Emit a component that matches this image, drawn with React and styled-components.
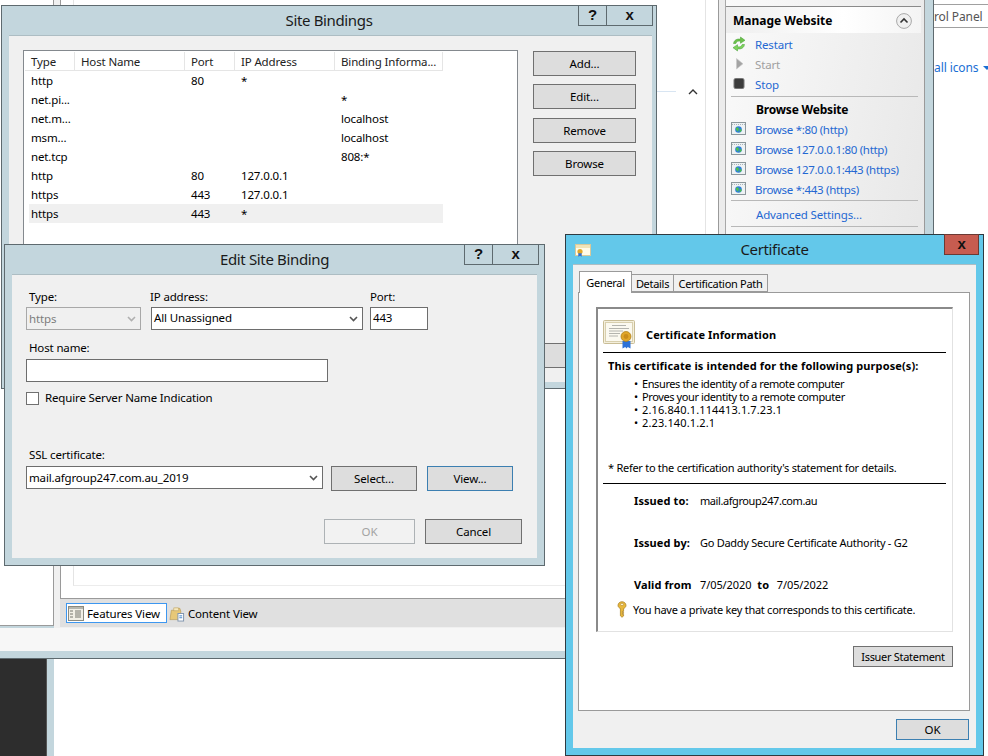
import React from "react"
import styled, { createGlobalStyle } from "styled-components"

const frame = "#c3d6dd"
const edge = "#5e6a6f"
const panel = "#f0f0f0"
const link = "#2468d2"

const Global = createGlobalStyle`
  html, body { margin: 0; padding: 0; background: #fff; }
  * { box-sizing: border-box; }
`

const Desktop = styled.div`
  position: relative;
  width: 988px;
  height: 756px;
  overflow: hidden;
  background: #fff;
  font-family: "Noto Sans", sans-serif;
  font-size: 11.5px;
  letter-spacing: -0.15px;
  color: #000;
`

/* windows on the desktop */
const Win = styled.div`
  position: absolute;
  left: ${p => p.$x}px;
  top: ${p => p.$y}px;
  width: ${p => p.$w}px;
  height: ${p => p.$h}px;
  background: ${p => p.$frame || frame};
  border: 1px solid ${p => p.$edge || edge};
  display: flex;
  flex-direction: column;
`
const MainWin = styled(Win)`
  border-top: none;
`
const TitleBar = styled.div`
  height: 29px;
  flex: none;
  position: relative;
  display: flex;
  align-items: center;
  justify-content: center;
  padding-bottom: 2px;
  font-size: 15px;
  letter-spacing: -0.35px;
  color: #1a1a1a;
`
const CaptionButtons = styled.div`
  position: absolute;
  top: -1px;
  right: ${p => p.$right}px;
  display: flex;
`
const CaptionButton = styled.div`
  width: ${p => p.$w}px;
  height: 21px;
  margin-left: -1px;
  border: 1px solid ${edge};
  background: ${frame};
  display: flex;
  align-items: center;
  justify-content: center;
  padding-bottom: 2px;
  font-family: "Liberation Sans", sans-serif;
  font-size: 15px;
  font-weight: 700;
  color: #111;
`
const CloseRed = styled(CaptionButton)`
  background: #c75c50;
  border-color: #6b3a34;
`
const Body = styled.div`
  flex: 1;
  background: ${panel};
  margin: 0 ${p => p.$r}px ${p => p.$b}px ${p => p.$l}px;
  border-top: 1px solid #adbdc3;
  position: relative;
`

/* main IIS window */
const MainInner = styled.div`
  flex: 1;
  display: flex;
  min-height: 0;
`
const LeftPane = styled.div`
  width: 54px;
  height: 627px;
  flex: none;
  background: #fff;
  border-right: 1px solid #9a9a9a;
  border-bottom: 1px solid #9a9a9a;
`
const CenterPane = styled.div`
  width: 664px;
  flex: none;
  display: flex;
  flex-direction: column;
  padding-left: 6px;
  background: #f0f0f0;
`
const ContentFrame = styled.div`
  height: 600px;
  flex: none;
  background: #fff;
  border-left: 1px solid #9a9a9a;
  border-bottom: 1px solid #9a9a9a;
  padding-left: 12px;
`
const InnerFrame = styled.div`
  height: 587px;
  width: 633px;
  border-left: 1px solid #e4e4e4;
  border-right: 1px solid #e4e4e4;
  border-bottom: 1px solid #ececec;
  display: flex;
  align-items: flex-start;
  padding-top: 85px;
`
const GroupLine = styled.div`
  flex: 1;
  height: 1px;
  margin-top: 7px;
  margin-right: 12px;
  background: #d8e5f2;
`
const GroupChevron = styled.svg`
  width: 10px;
  height: 10px;
  margin-right: 7px;
  margin-top: 3px;
`
const ViewBar = styled.div`
  height: 28px;
  flex: none;
  background: #e0e0e0;
  display: flex;
  align-items: center;
  padding-left: 6px;
`
const ViewTab = styled.div`
  height: 20px;
  display: flex;
  align-items: center;
  gap: 3px;
  padding: 0 6px 0 1px;
  border: 1px solid ${p => (p.$active ? "#3d97f0" : "transparent")};
  background: ${p => (p.$active ? "#fff" : "transparent")};
`
const ActionsPane = styled.div`
  width: 215px;
  flex: none;
  display: flex;
  border-left: 1px solid #9a9a9a;
  background: #ececec;
  padding-left: 6px;
`
const ActionsInner = styled.div`
  width: 200px;
  flex: none;
  border-left: 1px solid #a8a8a8;
  border-right: 1px solid #9a9a9a;
  background: linear-gradient(100deg, #fafafa 0%, #e2e2e2 100%);
  padding-top: 7px;
`
const SectionHead = styled.div`
  height: 27px;
  border-top: 1px solid #8a8a8a;
  background: linear-gradient(90deg, #eeeeee, #ffffff 60%, #f4f4f4);
  margin-right: 3px;
  display: flex;
  align-items: center;
  justify-content: space-between;
  padding: 1px 9px 0 7px;
  font-weight: 700;
  font-size: 12px;
  letter-spacing: 0;
`
const ActionList = styled.div`
  padding-top: ${p => p.$pad}px;
`
const ActionRow = styled.div`
  height: ${p => p.$h || 20}px;
  display: flex;
  align-items: center;
  padding-left: ${p => p.$in || 5}px;
  padding-top: ${p => p.$pt || 0}px;
  color: ${p => (p.$off ? "#a0a0a0" : link)};
  letter-spacing: ${p => p.$sp ?? -0.15}px;
  white-space: nowrap;
`
const ActionIcon = styled.div`
  width: 24px;
  flex: none;
  display: flex;
  align-items: center;
`
const ActionSplit = styled.div`
  height: 1px;
  background: #b8b8b8;
  margin: ${p => p.$m || "0"};
`
const ActionTitle = styled.div`
  padding-left: 30px;
  height: 18px;
  line-height: 18px;
  margin-top: 4px;
  font-size: 12px;
  font-weight: 700;
  letter-spacing: -0.2px;
`
const SideStrip = styled.div`
  flex: 1;
  background: ${frame};
`
const StatusBar = styled.div`
  height: 23px;
  flex: none;
  background: #f7f7f7;
`
const MainBottom = styled.div`
  height: 7px;
  flex: none;
  background: ${frame};
`

/* strip under the main window */
const DarkBlock = styled.div`
  position: absolute;
  left: 0;
  top: 659px;
  width: 47px;
  height: 97px;
  background: #2d2d2d;
  border-right: 1px solid #555;
`
const DarkEdge = styled.div`
  position: absolute;
  left: 47px;
  top: 659px;
  width: 7px;
  height: 97px;
  background: ${frame};
`

/* window behind, on the right */
const Breadcrumb = styled.div`
  position: absolute;
  left: 934px;
  top: 4px;
  width: 54px;
  height: 24px;
  border-top: 1px solid #a0a0a0;
  border-bottom: 1px solid #a0a0a0;
  line-height: 23px;
  overflow: hidden;
  white-space: nowrap;
  color: #555;
  font-size: 12px;
  letter-spacing: -0.1px;
`
const ViewLink = styled.div`
  position: absolute;
  left: 934px;
  top: 59px;
  color: #1a6fd4;
  font-size: 12px;
  letter-spacing: -0.1px;
  white-space: nowrap;
  display: flex;
  align-items: center;
  gap: 5px;
`
const TriDown = styled.span`
  width: 0;
  height: 0;
  border-left: 4px solid transparent;
  border-right: 4px solid transparent;
  border-top: 4px solid #1a6fd4;
`

/* Site Bindings */
const BindingsBody = styled.div`
  display: flex;
  padding: 14px 0 0 14px;
  height: 100%;
`
const ListBox = styled.div`
  width: 495px;
  height: 320px;
  flex: none;
  background: #fff;
  border: 1px solid #84898e;
  padding: 1px;
`
const ListHeader = styled.div`
  display: grid;
  grid-template-columns: 50px 110px 50px 100px 108px;
  height: 19px;
  border-bottom: 1px solid #e5e5e5;
  width: 418px;
`
const HeaderCell = styled.div`
  border-right: 1px solid #e5e5e5;
  padding-left: 6px;
  line-height: 19px;
  white-space: nowrap;
  color: #222;
`
const ListBodyRows = styled.div`
  padding-left: 4px;
`
const ListRow = styled.div`
  display: grid;
  grid-template-columns: 50px 110px 50px 100px 104px;
  height: 19px;
  width: 414px;
  line-height: 19px;
  background: ${p => (p.$sel ? "#f0f0f0" : "transparent")};
`
const ListCell = styled.div`
  padding-left: 2px;
  white-space: nowrap;
`
const SideButtons = styled.div`
  display: flex;
  flex-direction: column;
  margin-left: 15px;
  margin-top: 1px;
`
const Btn = styled.div`
  width: ${p => p.$w}px;
  height: ${p => p.$h || 25}px;
  margin-top: ${p => p.$mt || 0}px;
  margin-bottom: ${p => p.$mb || 0}px;
  margin-left: ${p => p.$ml || 0}px;
  margin-right: ${p => p.$mr || 0}px;
  background: ${p => (p.$off ? "#f2f2f2" : "#dddddd")};
  border: 1px solid ${p => (p.$off ? "#adb2b5" : p.$focus ? "#3c7fb1" : "#707070")};
  color: ${p => (p.$off ? "#a3a3a3" : "#000")};
  display: flex;
  align-items: center;
  justify-content: center;
  flex: none;
`
const CloseBehind = styled(Btn)`
  position: absolute;
  right: 0;
  top: 307px;
  border-right: none;
`

/* Edit Site Binding */
const EditBody = styled.div`
  padding: 14px 0 0 14px;
`
const FieldRow = styled.div`
  display: flex;
  gap: ${p => p.$gap || 0}px;
  margin-top: ${p => p.$mt || 0}px;
  align-items: ${p => p.$align || "flex-start"};
`
const Field = styled.div`
  width: ${p => p.$w}px;
  margin-left: ${p => p.$ml || 0}px;
  flex: none;
`
const Label = styled.div`
  height: 18px;
  line-height: ${p => p.$lh || 15}px;
  padding-left: ${p => p.$in ?? 3}px;
  margin-left: ${p => p.$out || 0}px;
  white-space: nowrap;
`
const Combo = styled.div`
  height: 23px;
  width: 100%;
  background: ${p => (p.$off ? panel : "#fff")};
  border: 1px solid ${p => (p.$off ? "#a8a8a8" : "#6d6d6d")};
  display: flex;
  align-items: center;
  justify-content: space-between;
  padding: 0 4px ${p => p.$pb ?? 2}px 2px;
  color: ${p => (p.$off ? "#7d7d7d" : "#000")};
  flex: none;
`
const Arrow = styled.svg`
  width: 9px;
  height: 6px;
  flex: none;
  margin-top: 2px;
`
const CheckRow = styled.div`
  display: flex;
  align-items: center;
  gap: 6px;
  margin-top: 9px;
  height: 14px;
  padding-bottom: 2px;
`
const CheckBox = styled.div`
  width: 13px;
  height: 13px;
  margin-top: 2px;
  background: #fff;
  border: 1px solid #707070;
`
const EditFooter = styled.div`
  display: flex;
  justify-content: flex-end;
  gap: 10px;
  margin-top: 30px;
  padding-right: 15px;
`

/* Certificate */
const CertBody = styled.div`
  padding: 6px 6px 0 5px;
  height: 100%;
  display: flex;
  flex-direction: column;
`
const TabStrip = styled.div`
  display: flex;
  align-items: flex-end;
  height: 21px;
  padding-left: 1px;
  position: relative;
  z-index: 1;
`
const Tab = styled.div`
  width: ${p => p.$w}px;
  height: ${p => (p.$on ? 22 : 18)}px;
  margin-bottom: ${p => (p.$on ? -1 : 0)}px;
  margin-left: ${p => (p.$on ? 0 : -1)}px;
  background: ${p => (p.$on ? "#fff" : "#f0f0f0")};
  border: 1px solid #9a9a9a;
  border-bottom: ${p => (p.$on ? "none" : "1px solid #9a9a9a")};
  text-align: center;
  line-height: ${p => (p.$on ? 21 : 18)}px;
  font-size: 11px;
  letter-spacing: -0.3px;
  white-space: nowrap;
`
const TabPanel = styled.div`
  height: 419px;
  flex: none;
  background: #fff;
  border: 1px solid #9a9a9a;
  padding: 14px 17px 0 17px;
`
const InfoBox = styled.div`
  height: 325px;
  width: 357px;
  border-top: 2px solid #8a8a8a;
  border-left: 2px solid #8a8a8a;
  border-right: 1px solid #e2e2e2;
  border-bottom: 1px solid #e2e2e2;
  padding: 0 6px 0 5px;
  font-size: 11px;
  letter-spacing: -0.27px;
`
const InfoHeader = styled.div`
  height: 44px;
  padding: 9px 0 2px;
  display: flex;
  gap: 11px;
  border-bottom: 1px solid #000;
  font-weight: 700;
  letter-spacing: 0.12px;
  align-items: center;
`
const Purpose = styled.div`
  font-weight: 700;
  letter-spacing: 0.12px;
  height: 14px;
  line-height: 14px;
  margin: 6px 0 0 5px;
  white-space: nowrap;
`
const Bullets = styled.ul`
  list-style: none;
  margin: 4px 0 0 0;
  padding: 0 0 0 31px;
`
const Bullet = styled.li`
  height: 13px;
  line-height: 13px;
  white-space: nowrap;
  letter-spacing: ${p => p.$sp}px;
  &::before {
    content: "•";
    display: inline-block;
    width: 8px;
  }
`
const Note = styled.div`
  height: 14px;
  line-height: 14px;
  margin: 32px 0 8px 5px;
  white-space: nowrap;
`
const InfoGrid = styled.div`
  border-top: 1px solid #000;
  padding: 10px 0 0 31px;
`
const InfoLine = styled.div`
  display: grid;
  grid-template-columns: 66px 1fr;
  height: 42px;
  line-height: 14px;
  white-space: nowrap;
`
const InfoKey = styled.span`
  font-weight: 700;
  letter-spacing: 0.1px;
`
const InfoValue = styled.span`
  letter-spacing: ${p => p.$sp ?? -0.27}px;
`
const InfoDate = styled.span`
  letter-spacing: -0.1px;
  margin-right: 6px;
  margin-left: ${p => p.$ml || 0}px;
`
const KeyRow = styled.div`
  display: flex;
  align-items: center;
  gap: 6px;
  padding-left: 14px;
  height: 18px;
  margin-top: -20px;
  white-space: nowrap;
`
const StatementRow = styled.div`
  display: flex;
  justify-content: flex-end;
  margin-top: 14px;
  font-size: 11px;
  letter-spacing: -0.3px;
`
const CertFooter = styled.div`
  display: flex;
  justify-content: flex-end;
  margin-top: 8px;
`

const RestartIcon = () => (
  <svg width="16" height="16" viewBox="0 0 16 16">
    <path d="M2.5 7.5C3 4 6 2.5 9.5 3.2L9.5 1l4.5 3.3-4.5 3V5.2C7 4.7 5.5 5.5 4.8 7.5z" fill="#6cc24a" stroke="#3f9a2e" strokeWidth=".5" />
    <path d="M13.5 8.5C13 12 10 13.5 6.5 12.8L6.5 15 2 11.7l4.5-3v2.1c2.5.5 4-.3 4.7-2.3z" fill="#7dd35c" stroke="#3f9a2e" strokeWidth=".5" />
  </svg>
)
const StartIcon = () => (
  <svg width="16" height="16" viewBox="0 0 16 16">
    <path d="M5.500 2.500v10.500l6.500-5.200z" fill="#a4a4a4" stroke="#c8c8c8" strokeWidth=".6" />
  </svg>
)
const StopIcon = () => (
  <svg width="16" height="16" viewBox="0 0 16 16">
    <rect x="3" y="2.500" width="10" height="10" rx="1.500" fill="#3c3c3c" stroke="#777" />
  </svg>
)
const BrowseIcon = () => (
  <svg width="16" height="14" viewBox="0 0 16 14">
    <rect x="0.5" y="0.5" width="14" height="12" fill="#eef2f4" stroke="#8c979b" />
    <path d="M1 2.500h13" stroke="#aab4b8" strokeDasharray="1 1" />
    <circle cx="7.500" cy="7.500" r="3.300" fill="#2f7fd6" />
    <path d="M5 6c1.400-.8 2.600-.4 2.800.7.100.9-.7 1.300-.5 2.900C6 9.400 4.600 7.700 5 6zM8.600 7.300c.9-.2 1.700 0 2.200.6-.3 1.100-1.100 1.900-2 2.100z" fill="#4cc04a" />
  </svg>
)
const CollapseIcon = () => (
  <svg width="16" height="16" viewBox="0 0 16 16">
    <circle cx="8" cy="8" r="7.400" fill="#f0f0f0" stroke="#a8a8a8" />
    <path d="M4.500 9.500 8 6l3.500 3.500" fill="none" stroke="#333" strokeWidth="1.600" />
  </svg>
)
const FeaturesIcon = () => (
  <svg width="16" height="16" viewBox="0 0 16 16">
    <rect x="0.5" y="1.500" width="15" height="14" fill="#f1efe6" stroke="#8a8a80" />
    <rect x="1" y="2" width="14" height="2" fill="#b7b7ae" />
    <path d="M2 6h3M2 9h3M2 12h3M7 6h6M7 8h6M7 10h6M7 12h6" stroke="#77776f" />
  </svg>
)
const ContentIcon = () => (
  <svg width="16" height="17" viewBox="0 0 17 17">
    <path d="M1 15 2.500 5h3l1-2h5l1 3v9z" fill="#e7c878" stroke="#b1924a" strokeWidth=".6" />
    <path d="M5 2.500h5l.5 3H5z" fill="#f7e9bd" stroke="#b1924a" strokeWidth=".5" />
    <rect x="9.500" y="8.500" width="6" height="8" fill="#fff" stroke="#7e93ad" />
    <path d="M11 11h3M11 13h3" stroke="#3a7fc9" />
  </svg>
)
const CertSmall = styled(({ className }) => (
  <svg className={className} width="16" height="13" viewBox="0 0 16 13">
    <rect x="0.5" y="0.5" width="15" height="11" fill="#fffbe8" stroke="#d8c99a" />
    <rect x="1" y="1" width="14" height="3" fill="#f1e4b8" />
    <circle cx="5" cy="7.500" r="2.600" fill="#e0a92c" />
    <path d="M3.300 9.300v3.400l1.700-1 1.700 1V9.300z" fill="#2f6fd0" />
  </svg>
))`
  position: absolute;
  left: 9px;
  top: 9px;
`
const CertLarge = styled(({ className }) => (
  <svg className={className} width="32" height="29" viewBox="0 0 32 29">
    <rect x="0.5" y="0.5" width="31" height="23" rx="1" fill="#f4efdc" stroke="#c9bd96" />
    <rect x="2.500" y="2.500" width="27" height="19" fill="#fbf9f0" stroke="#d8cfae" />
    <path d="M9 5.500h14M6 8.500h20M6 11h14M6 13.500h11M6 16h9" stroke="#b4b4ae" />
    <path d="M19.500 21v7.500l2.700-1.600 1.300 1.600 1.300-1.600 2.700 1.600V21z" fill="#2e72d8" />
    <circle cx="23" cy="16.500" r="5" fill="#e0a62a" stroke="#a97a16" strokeWidth=".7" />
    <circle cx="23" cy="16.500" r="2.400" fill="#c88c1c" />
  </svg>
))`
  flex: none;
`
const KeyIcon = styled(({ className }) => (
  <svg className={className} width="10" height="17" viewBox="0 0 10 17">
    <path d="M5 .7C2.800.7 1 2.300 1 4.300c0 1.500 1 2.700 2.400 3.200v7.300L5 16.300l1.600-1.400v-1.500H5.400v-1h1.200v-1H5.400v-1h1.200V7.500C8 7 9 5.800 9 4.300 9 2.300 7.200.7 5 .7z" fill="#e8b83c" stroke="#a67a1c" strokeWidth=".7" />
    <ellipse cx="5" cy="3.400" rx="1.600" ry="1.100" fill="#fff6d6" stroke="#a67a1c" strokeWidth=".5" />
  </svg>
))`
  flex: none;
`
const ComboArrow = ({ off }) => (
  <Arrow viewBox="0 0 9 6">
    <path d="M1 1l3.500 3.500L8 1" fill="none" stroke={off ? "#b0b0b0" : "#555"} strokeWidth="1.600" />
  </Arrow>
)

const filas = [
  ["http", "", "80", "*", ""],
  ["net.pi...", "", "", "", "*"],
  ["net.m...", "", "", "", "localhost"],
  ["msm...", "", "", "", "localhost"],
  ["net.tcp", "", "", "", "808:*"],
  ["http", "", "80", "127.0.0.1", ""],
  ["https", "", "443", "127.0.0.1", ""],
  ["https", "", "443", "*", ""],
]
const browseLinks = ["Browse *:80 (http)", "Browse 127.0.0.1:80 (http)", "Browse 127.0.0.1:443 (https)", "Browse *:443 (https)"]

const App = () => {
  return (
    <Desktop>
      <Global />

      <Breadcrumb>rol Panel</Breadcrumb>
      <ViewLink>all icons <TriDown /></ViewLink>

      <MainWin $x={-1} $y={-1} $w={935} $h={660}>
        <MainInner>
          <LeftPane />
          <CenterPane>
            <ContentFrame>
              <InnerFrame>
                <GroupLine />
                <GroupChevron viewBox="0 0 10 10">
                  <path d="M1 7l4-4 4 4" fill="none" stroke="#333" strokeWidth="1.400" />
                </GroupChevron>
              </InnerFrame>
            </ContentFrame>
            <ViewBar>
              <ViewTab $active><FeaturesIcon />Features View</ViewTab>
              <ViewTab><ContentIcon />Content View</ViewTab>
            </ViewBar>
          </CenterPane>
          <ActionsPane>
            <ActionsInner>
              <SectionHead>Manage Website<CollapseIcon /></SectionHead>
              <ActionList $pad={1}>
                <ActionRow><ActionIcon><RestartIcon /></ActionIcon>Restart</ActionRow>
                <ActionRow $off><ActionIcon><StartIcon /></ActionIcon>Start</ActionRow>
                <ActionRow><ActionIcon><StopIcon /></ActionIcon>Stop</ActionRow>
              </ActionList>
              <ActionSplit $m="2px 6px 0 5px" />
              <ActionTitle>Browse Website</ActionTitle>
              <ActionList $pad={0}>
                {browseLinks.map(t => (
                  <ActionRow key={t} $sp={-0.3}><ActionIcon><BrowseIcon /></ActionIcon>{t}</ActionRow>
                ))}
              </ActionList>
              <ActionSplit $m="1px 6px 0 5px" />
              <ActionRow $h={25} $in={30} $pt={2}>Advanced Settings...</ActionRow>
              <ActionSplit $m="0 6px 0 5px" />
            </ActionsInner>
            <SideStrip />
          </ActionsPane>
        </MainInner>
        <StatusBar />
        <MainBottom />
      </MainWin>

      <DarkBlock />
      <DarkEdge />

      <Win $x={1} $y={5} $w={656} $h={384}>
        <TitleBar>
          Site Bindings
          <CaptionButtons $right={3}>
            <CaptionButton $w={29}>?</CaptionButton>
            <CaptionButton $w={47}>x</CaptionButton>
          </CaptionButtons>
        </TitleBar>
        <Body $l={7} $r={4} $b={6}>
          <BindingsBody>
            <ListBox>
              <ListHeader>
                <HeaderCell>Type</HeaderCell>
                <HeaderCell>Host Name</HeaderCell>
                <HeaderCell>Port</HeaderCell>
                <HeaderCell>IP Address</HeaderCell>
                <HeaderCell>Binding Informa...</HeaderCell>
              </ListHeader>
              <ListBodyRows>
                {filas.map((f, i) => (
                  <ListRow key={i} $sel={i === 7}>
                    {f.map((c, j) => <ListCell key={j}>{c}</ListCell>)}
                  </ListRow>
                ))}
              </ListBodyRows>
            </ListBox>
            <SideButtons>
              <Btn $w={103}>Add...</Btn>
              <Btn $w={103} $mt={8}>Edit...</Btn>
              <Btn $w={103} $mt={9}>Remove</Btn>
              <Btn $w={103} $mt={8}>Browse</Btn>
            </SideButtons>
          </BindingsBody>
          <CloseBehind $w={120} />
        </Body>
      </Win>

      <Win $x={4} $y={244} $w={541} $h={322}>
        <TitleBar>
          Edit Site Binding
          <CaptionButtons $right={5}>
            <CaptionButton $w={29}>?</CaptionButton>
            <CaptionButton $w={47}>x</CaptionButton>
          </CaptionButtons>
        </TitleBar>
        <Body $l={7} $r={7} $b={7}>
          <EditBody>
            <FieldRow>
              <Field $w={115}>
                <Label>Type:</Label>
                <Combo $off $pb={1}>https<ComboArrow off /></Combo>
              </Field>
              <Field $w={212} $ml={10}>
                <Label $in={0} $out={-1}>IP address:</Label>
                <Combo>All Unassigned<ComboArrow /></Combo>
              </Field>
              <Field $w={58} $ml={7}>
                <Label $in={0}>Port:</Label>
                <Combo>443</Combo>
              </Field>
            </FieldRow>
            <FieldRow $mt={11}>
              <Field $w={302}>
                <Label $lh={13}>Host name:</Label>
                <Combo />
              </Field>
            </FieldRow>
            <CheckRow><CheckBox />Require Server Name Indication</CheckRow>
            <FieldRow $mt={43} $align="flex-end" $gap={8}>
              <Field $w={297}>
                <Label $lh={13}>SSL certificate:</Label>
                <Combo $pb={1}>mail.afgroup247.com.au_2019<ComboArrow /></Combo>
              </Field>
              <Btn $w={86} $mb={-2}>Select...</Btn>
              <Btn $w={86} $focus $ml={2} $mb={-2}>View...</Btn>
            </FieldRow>
            <EditFooter>
              <Btn $w={91} $off>OK</Btn>
              <Btn $w={97}>Cancel</Btn>
            </EditFooter>
          </EditBody>
        </Body>
      </Win>

      <Win $x={565} $y={234} $w={419} $h={522} $frame="#63c8ea" $edge="#2f3a40">
        <TitleBar>
          <CertSmall />
          Certificate
          <CaptionButtons $right={4}>
            <CloseRed $w={35}>x</CloseRed>
          </CaptionButtons>
        </TitleBar>
        <Body $l={7} $r={7} $b={7}>
          <CertBody>
            <TabStrip>
              <Tab $on $w={53}>General</Tab>
              <Tab $w={43}>Details</Tab>
              <Tab $w={95}>Certification Path</Tab>
            </TabStrip>
            <TabPanel>
              <InfoBox>
                <InfoHeader><CertLarge />Certificate Information</InfoHeader>
                <Purpose>This certificate is intended for the following purpose(s):</Purpose>
                <Bullets>
                  <Bullet $sp={-0.4}>Ensures the identity of a remote computer</Bullet>
                  <Bullet $sp={-0.4}>Proves your identity to a remote computer</Bullet>
                  <Bullet $sp={0.13}>2.16.840.1.114413.1.7.23.1</Bullet>
                  <Bullet $sp={0.13}>2.23.140.1.2.1</Bullet>
                </Bullets>
                <Note>* Refer to the certification authority's statement for details.</Note>
                <InfoGrid>
                  <InfoLine><InfoKey>Issued to:</InfoKey><InfoValue $sp={-0.42}>mail.afgroup247.com.au</InfoValue></InfoLine>
                  <InfoLine><InfoKey>Issued by:</InfoKey><InfoValue>Go Daddy Secure Certificate Authority - G2</InfoValue></InfoLine>
                  <InfoLine>
                    <InfoKey>Valid from</InfoKey>
                    <span><InfoDate>7/05/2020</InfoDate><InfoKey>to</InfoKey> <InfoDate $ml={5}>7/05/2022</InfoDate></span>
                  </InfoLine>
                </InfoGrid>
                <KeyRow><KeyIcon />You have a private key that corresponds to this certificate.</KeyRow>
              </InfoBox>
              <StatementRow><Btn $w={100} $h={21} $mr={-1}>Issuer Statement</Btn></StatementRow>
            </TabPanel>
            <CertFooter><Btn $w={73} $h={21} $focus $mr={1}>OK</Btn></CertFooter>
          </CertBody>
        </Body>
      </Win>
    </Desktop>
  )
}
export default App
